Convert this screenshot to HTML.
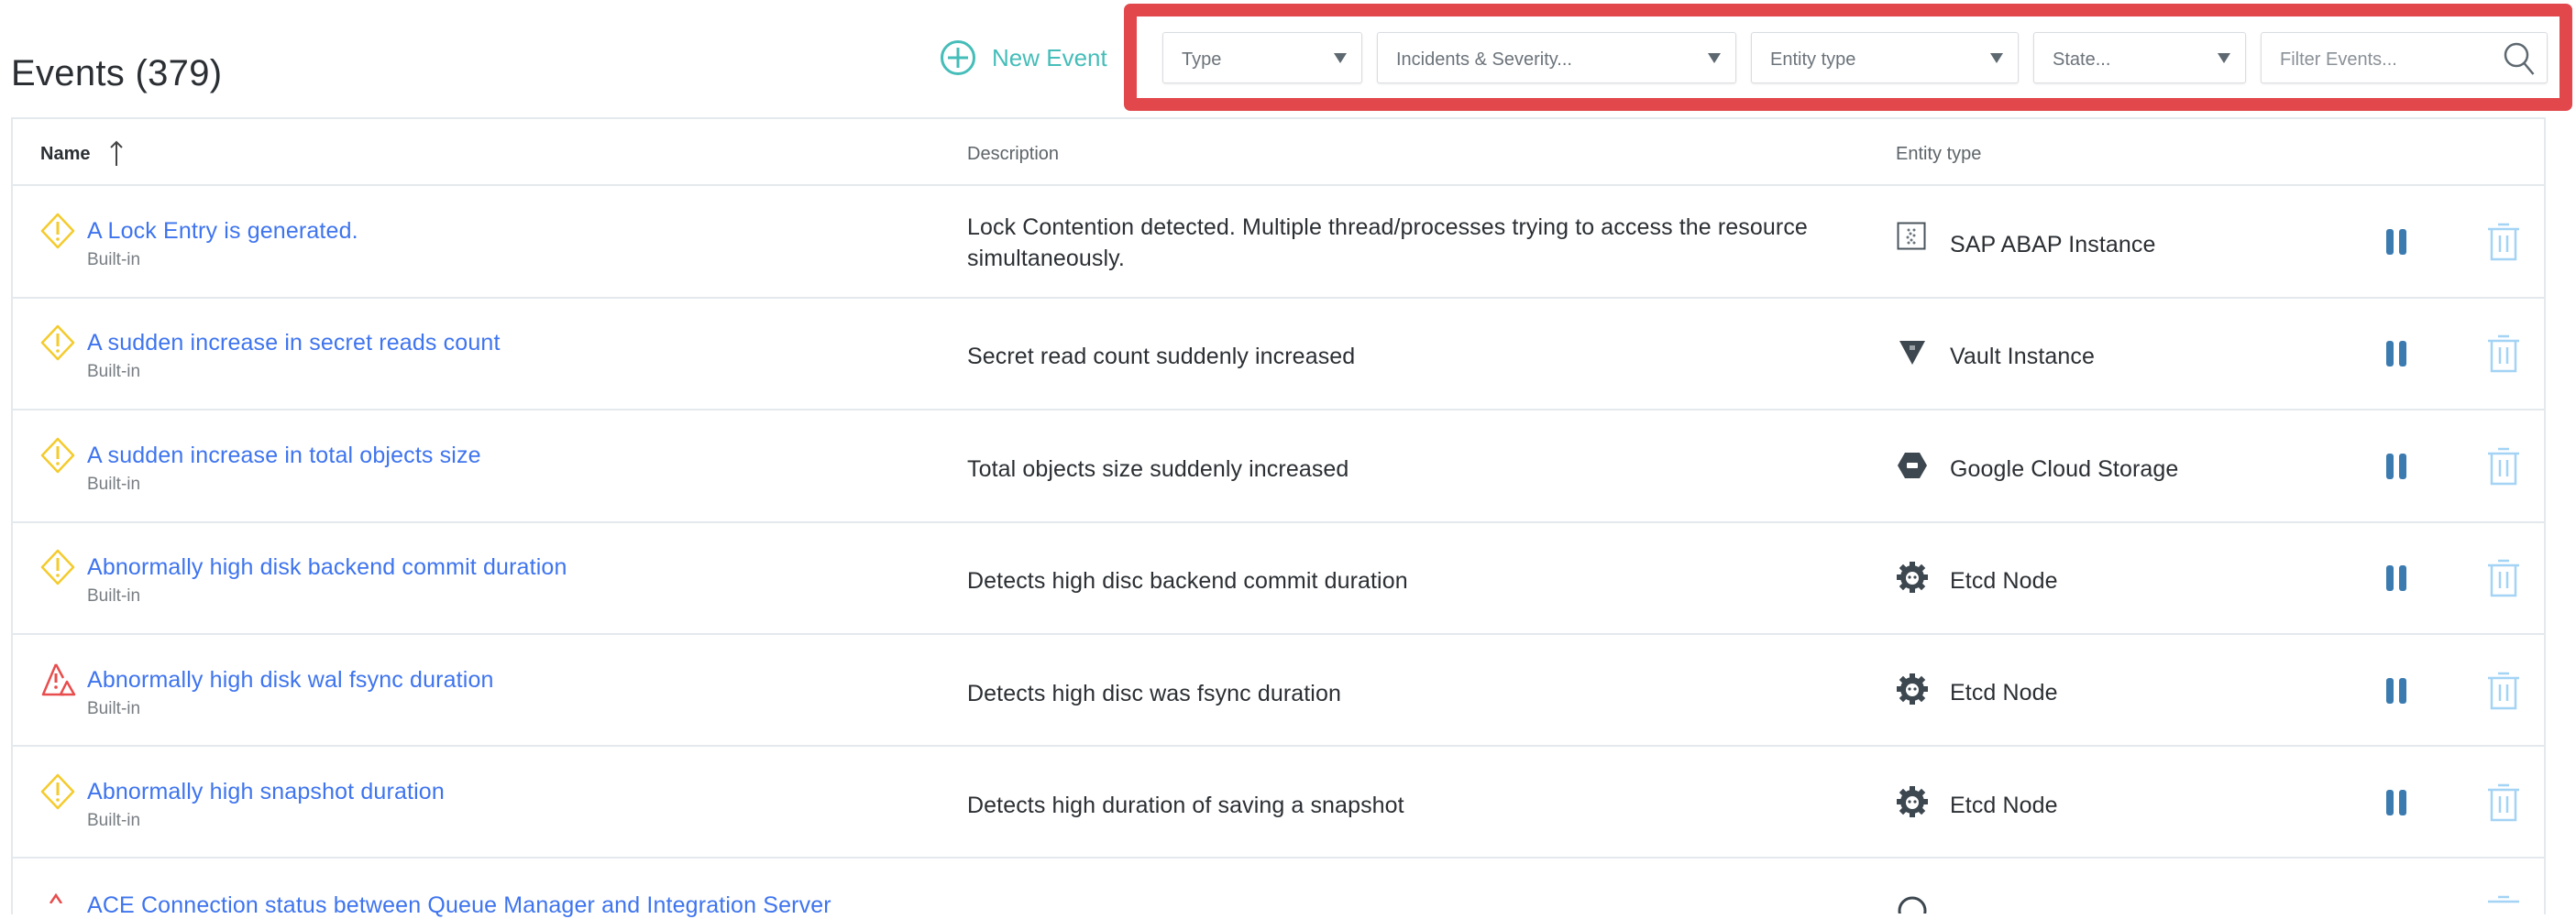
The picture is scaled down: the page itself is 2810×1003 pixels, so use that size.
<!DOCTYPE html>
<html><head><meta charset="utf-8"><style>
*{margin:0;padding:0;box-sizing:border-box}
body{width:2810px;height:984px;overflow:hidden;background:#fff;font-family:"Liberation Sans",sans-serif;position:relative;color:#2b2f33}
.a{position:absolute;white-space:nowrap}
.dd{position:absolute;top:35px;height:56px;border:1.5px solid #d9dde1;border-radius:3px;background:#fff;box-shadow:0 1px 2px rgba(0,0,0,.08)}
.dd span{position:absolute;left:20px;top:18px;font-size:20px;color:#6b737a}
.dd i{position:absolute;right:16px;top:22px;width:0;height:0;border-left:7px solid transparent;border-right:7px solid transparent;border-top:11px solid #5d6870}
.name{font-size:25px;color:#3e74ee;letter-spacing:0.15px}
.bi{font-size:19px;color:#777d82}
.desc{font-size:25px;color:#2b2f33;letter-spacing:0.1px}
.ent{font-size:25px;color:#2b2f33;letter-spacing:0.1px}
.hr{position:absolute;left:12px;width:2765px;height:2px;background:#e4e9ed}
</style></head><body>
<div class="a" style="left:12px;top:58px;font-size:40px;letter-spacing:0.3px;color:#2b2f33">Events (379)</div>
<svg class="a" style="left:1025px;top:43px" width="40" height="40" viewBox="0 0 40 40"><circle cx="20" cy="20" r="17.5" fill="none" stroke="#45bdb9" stroke-width="3"/><path d="M20 9v22M9 20h22" stroke="#45bdb9" stroke-width="3"/></svg>
<div class="a" style="left:1082px;top:48px;font-size:26px;color:#45bdb9">New Event</div>

<div class="a" style="left:1226px;top:4px;width:1580px;height:117px;border:14px solid #e2474c;border-radius:7px"></div>
<div class="dd" style="left:1268px;width:218px"><span>Type</span><i></i></div>
<div class="dd" style="left:1502px;width:392px"><span>Incidents &amp; Severity...</span><i></i></div>
<div class="dd" style="left:1910px;width:292px"><span>Entity type</span><i></i></div>
<div class="dd" style="left:2218px;width:232px"><span>State...</span><i></i></div>
<div class="dd" style="left:2466px;width:313px"><span style="color:#8a9197">Filter Events...</span>
<svg style="position:absolute;right:12px;top:9px" width="36" height="38" viewBox="0 0 36 38"><circle cx="15" cy="15" r="12" fill="none" stroke="#5d6870" stroke-width="2.5"/><path d="M23.5 24l10 12" stroke="#5d6870" stroke-width="2.5"/></svg></div>

<div class="a" style="left:12px;top:128px;width:2765px;height:870px;border:2px solid #e4e9ed;border-bottom:none"></div>
<div class="hr" style="top:201px"></div>
<div class="a" style="left:44px;top:157px;font-size:20px;font-weight:bold;color:#2b2f33">Name</div>
<svg class="a" style="left:119px;top:153px" width="16" height="30" viewBox="0 0 16 30"><path d="M8 2v26M2 8l6-6 6 6" fill="none" stroke="#444" stroke-width="2"/></svg>
<div class="a" style="left:1055px;top:157px;font-size:20px;color:#5d6469">Description</div>
<div class="a" style="left:2068px;top:157px;font-size:20px;color:#5d6469">Entity type</div>

<div class="hr" style="top:324px"></div>
<div class="hr" style="top:446px"></div>
<div class="hr" style="top:569px"></div>
<div class="hr" style="top:691px"></div>
<div class="hr" style="top:813px"></div>
<div class="hr" style="top:935px"></div>

<svg class="a" style="left:44px;top:232px" width="38" height="40" viewBox="0 0 38 40"><path d="M19 2L36 20 19 38 2 20Z" fill="none" stroke="#f4cb2d" stroke-width="2.5" stroke-linejoin="round"/><path d="M19 10v14" stroke="#f4cb2d" stroke-width="3"/><circle cx="19" cy="29" r="1.8" fill="#f4cb2d"/></svg>
<svg class="a" style="left:44px;top:354px" width="38" height="40" viewBox="0 0 38 40"><path d="M19 2L36 20 19 38 2 20Z" fill="none" stroke="#f4cb2d" stroke-width="2.5" stroke-linejoin="round"/><path d="M19 10v14" stroke="#f4cb2d" stroke-width="3"/><circle cx="19" cy="29" r="1.8" fill="#f4cb2d"/></svg>
<svg class="a" style="left:44px;top:477px" width="38" height="40" viewBox="0 0 38 40"><path d="M19 2L36 20 19 38 2 20Z" fill="none" stroke="#f4cb2d" stroke-width="2.5" stroke-linejoin="round"/><path d="M19 10v14" stroke="#f4cb2d" stroke-width="3"/><circle cx="19" cy="29" r="1.8" fill="#f4cb2d"/></svg>
<svg class="a" style="left:44px;top:599px" width="38" height="40" viewBox="0 0 38 40"><path d="M19 2L36 20 19 38 2 20Z" fill="none" stroke="#f4cb2d" stroke-width="2.5" stroke-linejoin="round"/><path d="M19 10v14" stroke="#f4cb2d" stroke-width="3"/><circle cx="19" cy="29" r="1.8" fill="#f4cb2d"/></svg>
<svg class="a" style="left:44px;top:722px" width="40" height="40" viewBox="0 0 40 40"><path d="M17 3L3 36h23" fill="none" stroke="#e84c4c" stroke-width="2.5" stroke-linejoin="round"/><path d="M17 3l8 15" fill="none" stroke="#e84c4c" stroke-width="2.5"/><path d="M17 13v10" stroke="#e84c4c" stroke-width="3"/><circle cx="17" cy="28" r="1.8" fill="#e84c4c"/><path d="M29 22L22 36h15Z" fill="none" stroke="#e84c4c" stroke-width="2.5" stroke-linejoin="round"/></svg>
<svg class="a" style="left:44px;top:844px" width="38" height="40" viewBox="0 0 38 40"><path d="M19 2L36 20 19 38 2 20Z" fill="none" stroke="#f4cb2d" stroke-width="2.5" stroke-linejoin="round"/><path d="M19 10v14" stroke="#f4cb2d" stroke-width="3"/><circle cx="19" cy="29" r="1.8" fill="#f4cb2d"/></svg>
<svg class="a" style="left:44px;top:974px" width="40" height="12" viewBox="0 0 40 12"><path d="M11 12L17 3 23 12" fill="none" stroke="#e84c4c" stroke-width="2.5"/></svg>

<div class="a name" style="left:95px;top:238px">A Lock Entry is generated.</div><div class="a bi" style="left:95px;top:273px">Built-in</div>
<div class="a name" style="left:95px;top:360px">A sudden increase in secret reads count</div><div class="a bi" style="left:95px;top:395px">Built-in</div>
<div class="a name" style="left:95px;top:483px">A sudden increase in total objects size</div><div class="a bi" style="left:95px;top:518px">Built-in</div>
<div class="a name" style="left:95px;top:605px">Abnormally high disk backend commit duration</div><div class="a bi" style="left:95px;top:640px">Built-in</div>
<div class="a name" style="left:95px;top:728px">Abnormally high disk wal fsync duration</div><div class="a bi" style="left:95px;top:763px">Built-in</div>
<div class="a name" style="left:95px;top:850px">Abnormally high snapshot duration</div><div class="a bi" style="left:95px;top:885px">Built-in</div>
<div class="a name" style="left:95px;top:974px">ACE Connection status between Queue Manager and Integration Server</div>

<div class="a desc" style="left:1055px;top:234px">Lock Contention detected. Multiple thread/processes trying to access the resource</div>
<div class="a desc" style="left:1055px;top:268px">simultaneously.</div>
<div class="a desc" style="left:1055px;top:375px">Secret read count suddenly increased</div>
<div class="a desc" style="left:1055px;top:498px">Total objects size suddenly increased</div>
<div class="a desc" style="left:1055px;top:620px">Detects high disc backend commit duration</div>
<div class="a desc" style="left:1055px;top:743px">Detects high disc was fsync duration</div>
<div class="a desc" style="left:1055px;top:865px">Detects high duration of saving a snapshot</div>

<svg class="a" style="left:2069px;top:242px" width="32" height="32" viewBox="0 0 32 32"><rect x="1.5" y="1.5" width="29" height="28" fill="none" stroke="#4a545c" stroke-width="2"/><g fill="#6a747c"><circle cx="13" cy="9" r="1.5"/><circle cx="19" cy="9" r="1.5"/><circle cx="15" cy="13" r="1.5"/><circle cx="19" cy="15" r="1.5"/><circle cx="12" cy="17" r="1.5"/><circle cx="16" cy="20" r="1.5"/><circle cx="19" cy="23" r="1.5"/><circle cx="13" cy="23" r="1.5"/></g></svg>
<svg class="a" style="left:2071px;top:371px" width="30" height="28" viewBox="0 0 30 28"><path d="M1 1h28L15 27Z" fill="#3d474f"/><rect x="12" y="6" width="6" height="5" fill="#9aa2a8"/></svg>
<svg class="a" style="left:2069px;top:493px" width="34" height="30" viewBox="0 0 34 30"><path d="M9 1h16l8 14-8 14H9L1 15Z" fill="#3d474f"/><rect x="11" y="12" width="12" height="6" rx="1" fill="#fff"/></svg>
<svg class="a" style="left:2069px;top:613px" width="34" height="34" viewBox="0 0 34 34"><g fill="#3d474f"><circle cx="17" cy="17" r="13"/><rect x="14" y="0" width="6" height="6"/><rect x="14" y="28" width="6" height="6"/><rect x="0" y="14" width="6" height="6"/><rect x="28" y="14" width="6" height="6"/><rect x="4" y="4" width="6" height="6" transform="rotate(45 7 7)"/><rect x="24" y="4" width="6" height="6" transform="rotate(45 27 7)"/><rect x="4" y="24" width="6" height="6" transform="rotate(45 7 27)"/><rect x="24" y="24" width="6" height="6" transform="rotate(45 27 27)"/></g><circle cx="17" cy="18" r="7" fill="#fff"/><circle cx="14" cy="17" r="1.6" fill="#3d474f"/><circle cx="20" cy="17" r="1.6" fill="#3d474f"/></svg>
<svg class="a" style="left:2069px;top:735px" width="34" height="34" viewBox="0 0 34 34"><g fill="#3d474f"><circle cx="17" cy="17" r="13"/><rect x="14" y="0" width="6" height="6"/><rect x="14" y="28" width="6" height="6"/><rect x="0" y="14" width="6" height="6"/><rect x="28" y="14" width="6" height="6"/><rect x="4" y="4" width="6" height="6" transform="rotate(45 7 7)"/><rect x="24" y="4" width="6" height="6" transform="rotate(45 27 7)"/><rect x="4" y="24" width="6" height="6" transform="rotate(45 7 27)"/><rect x="24" y="24" width="6" height="6" transform="rotate(45 27 27)"/></g><circle cx="17" cy="18" r="7" fill="#fff"/><circle cx="14" cy="17" r="1.6" fill="#3d474f"/><circle cx="20" cy="17" r="1.6" fill="#3d474f"/></svg>
<svg class="a" style="left:2069px;top:858px" width="34" height="34" viewBox="0 0 34 34"><g fill="#3d474f"><circle cx="17" cy="17" r="13"/><rect x="14" y="0" width="6" height="6"/><rect x="14" y="28" width="6" height="6"/><rect x="0" y="14" width="6" height="6"/><rect x="28" y="14" width="6" height="6"/><rect x="4" y="4" width="6" height="6" transform="rotate(45 7 7)"/><rect x="24" y="4" width="6" height="6" transform="rotate(45 27 7)"/><rect x="4" y="24" width="6" height="6" transform="rotate(45 7 27)"/><rect x="24" y="24" width="6" height="6" transform="rotate(45 27 27)"/></g><circle cx="17" cy="18" r="7" fill="#fff"/><circle cx="14" cy="17" r="1.6" fill="#3d474f"/><circle cx="20" cy="17" r="1.6" fill="#3d474f"/></svg>
<svg class="a" style="left:2069px;top:977px" width="34" height="20" viewBox="0 0 34 20"><circle cx="17" cy="17" r="14" fill="none" stroke="#3d474f" stroke-width="3"/></svg>

<div class="a ent" style="left:2127px;top:253px">SAP ABAP Instance</div>
<div class="a ent" style="left:2127px;top:375px">Vault Instance</div>
<div class="a ent" style="left:2127px;top:498px">Google Cloud Storage</div>
<div class="a ent" style="left:2127px;top:620px">Etcd Node</div>
<div class="a ent" style="left:2127px;top:742px">Etcd Node</div>
<div class="a ent" style="left:2127px;top:865px">Etcd Node</div>

<svg class="a" style="left:2602px;top:249px" width="24" height="30"><rect x="1" y="1" width="8" height="28" rx="3" fill="#3b7bb0"/><rect x="15" y="1" width="8" height="28" rx="3" fill="#3b7bb0"/></svg>
<svg class="a" style="left:2602px;top:371px" width="24" height="30"><rect x="1" y="1" width="8" height="28" rx="3" fill="#3b7bb0"/><rect x="15" y="1" width="8" height="28" rx="3" fill="#3b7bb0"/></svg>
<svg class="a" style="left:2602px;top:494px" width="24" height="30"><rect x="1" y="1" width="8" height="28" rx="3" fill="#3b7bb0"/><rect x="15" y="1" width="8" height="28" rx="3" fill="#3b7bb0"/></svg>
<svg class="a" style="left:2602px;top:616px" width="24" height="30"><rect x="1" y="1" width="8" height="28" rx="3" fill="#3b7bb0"/><rect x="15" y="1" width="8" height="28" rx="3" fill="#3b7bb0"/></svg>
<svg class="a" style="left:2602px;top:739px" width="24" height="30"><rect x="1" y="1" width="8" height="28" rx="3" fill="#3b7bb0"/><rect x="15" y="1" width="8" height="28" rx="3" fill="#3b7bb0"/></svg>
<svg class="a" style="left:2602px;top:861px" width="24" height="30"><rect x="1" y="1" width="8" height="28" rx="3" fill="#3b7bb0"/><rect x="15" y="1" width="8" height="28" rx="3" fill="#3b7bb0"/></svg>

<svg class="a" style="left:2713px;top:243px" width="36" height="42" viewBox="0 0 36 42"><g fill="none" stroke="#a3d3f5" stroke-width="2.5"><path d="M12 2h12M1 7h34M5 7v33h26V7M14 14v18M22 14v18"/></g></svg>
<svg class="a" style="left:2713px;top:365px" width="36" height="42" viewBox="0 0 36 42"><g fill="none" stroke="#a3d3f5" stroke-width="2.5"><path d="M12 2h12M1 7h34M5 7v33h26V7M14 14v18M22 14v18"/></g></svg>
<svg class="a" style="left:2713px;top:488px" width="36" height="42" viewBox="0 0 36 42"><g fill="none" stroke="#a3d3f5" stroke-width="2.5"><path d="M12 2h12M1 7h34M5 7v33h26V7M14 14v18M22 14v18"/></g></svg>
<svg class="a" style="left:2713px;top:610px" width="36" height="42" viewBox="0 0 36 42"><g fill="none" stroke="#a3d3f5" stroke-width="2.5"><path d="M12 2h12M1 7h34M5 7v33h26V7M14 14v18M22 14v18"/></g></svg>
<svg class="a" style="left:2713px;top:733px" width="36" height="42" viewBox="0 0 36 42"><g fill="none" stroke="#a3d3f5" stroke-width="2.5"><path d="M12 2h12M1 7h34M5 7v33h26V7M14 14v18M22 14v18"/></g></svg>
<svg class="a" style="left:2713px;top:855px" width="36" height="42" viewBox="0 0 36 42"><g fill="none" stroke="#a3d3f5" stroke-width="2.5"><path d="M12 2h12M1 7h34M5 7v33h26V7M14 14v18M22 14v18"/></g></svg>
<svg class="a" style="left:2713px;top:977px" width="36" height="10" viewBox="0 0 36 10"><path d="M12 2h12M1 7h34" stroke="#a3d3f5" stroke-width="2.5"/></svg>
</body></html>
